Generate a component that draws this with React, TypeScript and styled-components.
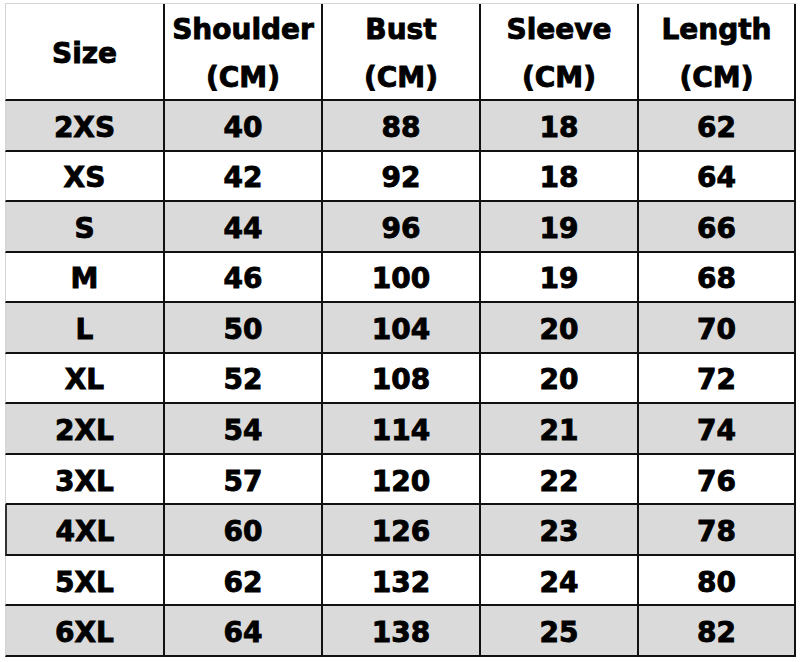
import React from 'react'
import styled, { createGlobalStyle } from 'styled-components'

const GlobalStyle = createGlobalStyle`
  html, body {
    margin: 0;
    padding: 0;
    background: #ffffff;
  }
  body {
    font-family: 'DejaVu Sans', 'Liberation Sans', sans-serif;
  }
`

interface SizeRow {
  size: string
  shoulder: number
  bust: number
  sleeve: number
  length: number
}

const rows: SizeRow[] = [
  { size: '2XS', shoulder: 40, bust: 88, sleeve: 18, length: 62 },
  { size: 'XS', shoulder: 42, bust: 92, sleeve: 18, length: 64 },
  { size: 'S', shoulder: 44, bust: 96, sleeve: 19, length: 66 },
  { size: 'M', shoulder: 46, bust: 100, sleeve: 19, length: 68 },
  { size: 'L', shoulder: 50, bust: 104, sleeve: 20, length: 70 },
  { size: 'XL', shoulder: 52, bust: 108, sleeve: 20, length: 72 },
  { size: '2XL', shoulder: 54, bust: 114, sleeve: 21, length: 74 },
  { size: '3XL', shoulder: 57, bust: 120, sleeve: 22, length: 76 },
  { size: '4XL', shoulder: 60, bust: 126, sleeve: 23, length: 78 },
  { size: '5XL', shoulder: 62, bust: 132, sleeve: 24, length: 80 },
  { size: '6XL', shoulder: 64, bust: 138, sleeve: 25, length: 82 },
]

const headers = [
  ['Size'],
  ['Shoulder', '(CM)'],
  ['Bust', '(CM)'],
  ['Sleeve', '(CM)'],
  ['Length', '(CM)'],
]

const App: React.FC = () => {
  return (
    <>
      <GlobalStyle />
      <Page>
        <Chart>
          {headers.map((lines, i) => (
            <HeadCell key={lines[0]} $first={i === 0}>
              {lines.map(line => (
                <span key={line}>{line}</span>
              ))}
            </HeadCell>
          ))}
          {rows.map((row, r) =>
            [row.size, row.shoulder, row.bust, row.sleeve, row.length].map(
              (value, c) => (
                <Cell
                  key={`${row.size}-${c}`}
                  $shaded={r % 2 === 0}
                  $first={c === 0}
                  $darkEdge={row.size === '4XL'}
                >
                  {value}
                </Cell>
              )
            )
          )}
        </Chart>
      </Page>
    </>
  )
}

export default App

const Page = styled.div`
  width: 800px;
  height: 662px;
  padding: 3px 0 0 5px;
  box-sizing: border-box;
  background: #ffffff;
`

const Chart = styled.div`
  display: grid;
  grid-template-columns: 160px 158px 158px 158px 157px;
  grid-template-rows: 97px repeat(11, 1fr);
  width: 791px;
  height: 654px;
  border-top: 1px solid #d4d4d4;
  box-sizing: border-box;
`

const HeadCell = styled.div<{ $first?: boolean }>`
  display: flex;
  flex-direction: column;
  align-items: center;
  justify-content: center;
  border-right: 2px solid #111;
  border-bottom: 2px solid #111;
  border-left: ${({ $first }) => ($first ? '1px solid #d4d4d4' : 'none')};
  background: #ffffff;
  color: #000;
  font-size: 28px;
  font-weight: 700;
  line-height: 48px;
  -webkit-text-stroke: 0.9px #000;
  padding-top: 4px;
`

const Cell = styled.div<{
  $shaded?: boolean
  $first?: boolean
  $darkEdge?: boolean
}>`
  display: flex;
  align-items: center;
  justify-content: center;
  border-right: 2px solid #111;
  border-bottom: 2px solid #111;
  border-left: ${({ $first, $darkEdge }) =>
    $first ? ($darkEdge ? '2px solid #333' : '1px solid #d4d4d4') : 'none'};
  background: ${({ $shaded }) => ($shaded ? '#dadada' : '#ffffff')};
  color: #000;
  font-size: 28px;
  font-weight: 700;
  line-height: 1;
  -webkit-text-stroke: 0.9px #000;
  padding-top: 5px;
`
